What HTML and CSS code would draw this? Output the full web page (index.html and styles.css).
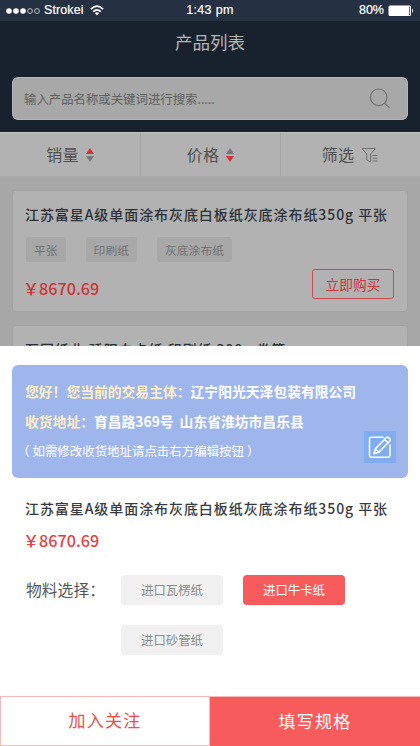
FILE: index.html
```html
<!DOCTYPE html>
<html lang="zh-CN">
<head>
<meta charset="utf-8">
<title>产品列表</title>
<link rel="stylesheet" href="styles.css">
</head>
<body>
<div class="phone">
  <header class="status">
    <div class="carrier">
      <svg width="35" height="8" viewBox="0 0 35 8"><g fill="#fff"><circle cx="3" cy="4" r="2.8"/><circle cx="10" cy="4" r="2.8"/><circle cx="17" cy="4" r="2.8"/></g><g fill="none" stroke="#dfe2e6" stroke-width=".8"><circle cx="24" cy="4" r="2.4"/><circle cx="31" cy="4" r="2.4"/></g></svg>
      <span class="carrier-name">Strokei</span>
      <svg class="wifi" width="14" height="11" viewBox="0 0 14 11"><g fill="none" stroke="#fff" stroke-width="1.7"><path d="M.9 4.1Q7-1.7 13.1 4.1"/><path d="M3.2 6.6Q7 3 10.8 6.6"/></g><path d="M4.8 8.1Q7 6.2 9.2 8.1L7 10.4z" fill="#fff"/></svg>
    </div>
    <span class="clock">1:43 pm</span>
    <div class="power">
      <span>80%</span>
      <svg width="26" height="12" viewBox="0 0 26 12"><rect x=".5" y=".5" width="22.5" height="10.5" rx="1.5" fill="#fff"/><path d="M21.5 1.5v8.5" stroke="#667080"/><path d="M24 3.5q2 2.2 0 4.4z" fill="#fff"/></svg>
    </div>
  </header>
  <h1 class="page-title">产品列表</h1>
  <div class="search-wrap">
    <div class="search">
      <span>输入产品名称或关键词进行搜索.....</span>
      <svg width="22" height="22" viewBox="0 0 22 22" fill="none" stroke="#707070" stroke-width="1.1"><circle cx="9.7" cy="9.3" r="8.3"/><path d="M15.5 15.2l5 4.7"/></svg>
    </div>
  </div>
  <nav class="filters">
    <div class="filter"><span>销量</span><svg width="8" height="16" viewBox="0 0 8 16"><path d="M4 1l4 6H0z" fill="#cb3538"/><path d="M0 9h8l-4 6z" fill="#777"/></svg></div>
    <div class="filter"><span>价格</span><svg width="8" height="16" viewBox="0 0 8 16"><path d="M4 1l4 6H0z" fill="#777"/><path d="M0 9h8l-4 6z" fill="#cb3538"/></svg></div>
    <div class="filter"><span>筛选</span><svg width="18" height="16" viewBox="0 0 18 16" fill="none" stroke="#707070"><path d="M1 1.5h13.5L9.6 7v8L5.7 13V7z"/><path d="M11.5 8.5h5M11.5 11.2h5M11.5 14h5"/></svg></div>
  </nav>
  <main class="list">
    <article class="product">
      <h2 class="name">江苏富星A级单面涂布灰底白板纸灰底涂布纸350g 平张</h2>
      <div class="tags"><span class="tag">平张</span><span class="tag">印刷纸</span><span class="tag">灰底涂布纸</span></div>
      <div class="buy-row"><div class="price dim"><span class="yen">￥</span>8670.69</div><button class="buy">立即购买</button></div>
    </article>
    <article class="product">
      <h2 class="name">万国纸业 骄阳白卡纸 印刷纸 300g 卷筒</h2>
    </article>
  </main>
  <section class="sheet">
    <div class="address">
      <p class="line"><span class="key">您好！您当前的交易主体：</span>辽宁阳光天泽包装有限公司</p>
      <p class="line"><span class="key">收货地址：</span>育昌路369号<span class="city">山东省淮坊市昌乐县</span></p>
      <p class="hint"><span class="open">（</span>如需修改收货地址请点击右方编辑按钮<span class="close">）</span></p>
      <button class="edit"><svg width="24" height="24" viewBox="0 0 24 24" fill="none" stroke="#fff" stroke-width="1.5" stroke-linejoin="round" stroke-linecap="round"><path d="M15 2.2H3.2Q1.5 2.2 1.5 4v16.5q0 1.7 1.7 1.7h17.1q1.7 0 1.7-1.7V10"/><path d="M6 18.8l1.4-5.1L18.4 2.4q1-.9 2 0l1.6 1.5q.9.9 0 1.9L10.9 17.2z"/><path d="M7.4 13.7l3.5 3.5M16.6 4.4l3.4 3.4"/></svg></button>
    </div>
    <h2 class="name sheet-name">江苏富星A级单面涂布灰底白板纸灰底涂布纸350g 平张</h2>
    <div class="price"><span class="yen">￥</span>8670.69</div>
    <div class="material">
      <span class="label">物料选择：</span>
      <div class="chips">
        <button class="chip">进口瓦楞纸</button>
        <button class="chip active">进口牛卡纸</button>
        <button class="chip">进口砂管纸</button>
      </div>
    </div>
    <footer class="actions">
      <button class="action follow">加入关注</button>
      <button class="action spec">填写规格</button>
    </footer>
  </section>
</div>
</body>
</html>
```
FILE: styles.css
```css
* { box-sizing: border-box; }
body { margin: 0; font-family: "Noto Sans CJK SC", sans-serif; }
h1, h2, p { margin: 0; }
button { font-family: inherit; padding: 0; border: 0; }
svg { display: block; flex: none; }

.phone { width: 420px; height: 746px; overflow: hidden; display: flex; flex-direction: column; background: #18222f; }
.status { flex: none; height: 21px; padding: 0 6px; display: grid; grid-template-columns: 1fr auto 1fr; align-items: center; background: #253142; color: #fff; font: 12.5px/21px "Liberation Sans", sans-serif; -webkit-text-stroke: .2px #fff; }
.carrier { display: flex; align-items: center; }
.carrier-name { margin-left: 3px; letter-spacing: .1px; }
.wifi { margin-left: 6px; }
.clock { letter-spacing: .35px; }
.power { display: flex; justify-content: flex-end; align-items: center; gap: 4px; }

.page-title { flex: none; height: 56px; line-height: 42px; text-align: center; font-size: 17.5px; font-weight: 400; color: #b5b5b5; }
.search-wrap { flex: none; height: 55px; padding: 0 12px; }
.search { height: 43px; padding: 0 16px 0 11px; display: flex; align-items: center; justify-content: space-between; border: 1px solid #b6b6b6; border-radius: 6px; background: #a8a8a8; color: #606060; font-size: 12.4px; }
.filters { flex: none; height: 45px; display: grid; grid-template-columns: repeat(3, 1fr); background: #b2b2b2; border-top: 1px solid #c2c2c2; border-bottom: 1px solid #aaa; }
.filter { display: flex; align-items: center; justify-content: center; gap: 7px; font-size: 16px; letter-spacing: .3px; color: #505050; }
.filter span { position: relative; top: -1px; }
.filter + .filter { border-left: 1px solid #a5a5a5; }

.list { flex: none; height: 169px; overflow: hidden; padding: 13px 12px 0; background: #a7a7a7; }
.product { height: 122px; padding: 10px 13px 0 12px; margin-bottom: 13px; border: 1px solid #a2a2a2; border-radius: 4px; background: #b2b2b2; }
.name { font-size: 14px; line-height: 26px; font-weight: 500; letter-spacing: .93px; white-space: nowrap; color: #2c3138; }
.tags { display: flex; gap: 20px; margin: 10px 0 0 1px; }
.tag { height: 25px; padding: 0 8px; line-height: 25px; border-radius: 3px; background: #a8a8a8; color: #707070; font-size: 11.8px; }
.buy-row { display: flex; justify-content: space-between; margin-top: 7px; }
.price { display: flex; font-size: 16.2px; line-height: 26px; font-weight: 500; color: #e84142; }
.yen { width: 14px; text-indent: -2px; }
.dim { color: #cb3538; padding-top: 6px; }
.buy { width: 82px; height: 30px; border: 1px solid #cc4a4d; border-radius: 3px; background: none; color: #cb3538; font-size: 13.7px; line-height: 28px; }

.sheet { flex: 1; display: flex; flex-direction: column; padding-top: 19px; background: #fff; }
.address { position: relative; height: 113px; margin: 0 12px; padding: 12px 13px 0; border-radius: 6px; background: #9fb6ed; color: #fff; }
.line { height: 29.5px; line-height: 28px; font-size: 13.8px; font-weight: 700; white-space: nowrap; }
.key { color: #fff0c4; }
.city { margin-left: 6px; }
.hint { line-height: 30px; font-size: 12.45px; white-space: nowrap; }
.open { margin-left: -8px; margin-right: 3px; }
.close { margin-left: 3px; }
.edit { position: absolute; right: 12px; bottom: 15px; width: 32px; height: 32px; display: grid; place-items: center; background: #81adf0; }
.sheet-name { margin: 17px 26px 0 25px; color: #373b40; }
.sheet > .price { margin: 6px 25px 0; }
.material { display: flex; margin: 22px 0 0 26px; }
.label { width: 95px; font-size: 15.8px; line-height: 30px; color: #555; white-space: nowrap; }
.chips { display: grid; grid-template-columns: 102px 102px; gap: 20px; }
.chip { height: 30px; border-radius: 4px; background: #f1f1f1; color: #8c8c8c; font-size: 12.4px; line-height: 30px; }
.active { background: #f85b5c; color: #fff; }
.actions { margin-top: auto; height: 50px; display: grid; grid-template-columns: 1fr 1fr; }
.action { font-size: 17px; line-height: 46px; padding-bottom: 2px; letter-spacing: 1.3px; }
.follow { border: 1px solid #fbb9b7; background: #fff; color: #ed4c4d; }
.spec { background: #f85b5c; color: #fff; border-top: 1px solid #fbb9b7; }
```
